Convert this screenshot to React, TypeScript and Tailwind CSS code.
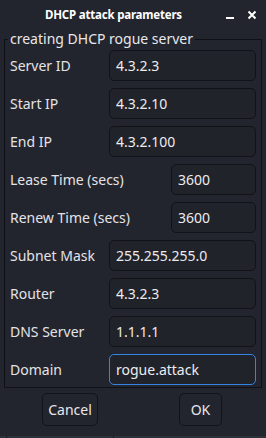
import { useState } from "react";

type Field = { label: string; value: string; narrow?: boolean; focused?: boolean };

const FIELDS: Field[] = [
  { label: "Server ID", value: "4.3.2.3" },
  { label: "Start IP", value: "4.3.2.10" },
  { label: "End IP", value: "4.3.2.100" },
  { label: "Lease Time (secs)", value: "3600", narrow: true },
  { label: "Renew Time (secs)", value: "3600", narrow: true },
  { label: "Subnet Mask", value: "255.255.255.0" },
  { label: "Router", value: "4.3.2.3" },
  { label: "DNS Server", value: "1.1.1.1" },
  { label: "Domain", value: "rogue.attack", focused: true },
];

function Row({ field }: { field: Field }) {
  const [value, setValue] = useState(field.value);
  return (
    <div className="flex items-center justify-between h-[31px]">
      <span className="text-[14px] text-[#e3e3e6]">{field.label}</span>
      <input
        value={value}
        onChange={(e) => setValue(e.target.value)}
        className={`h-[31px] rounded-[5px] bg-[#21232b] px-[6px] text-[14px] text-[#ececef] outline-none border ${
          field.focused ? "border-[#3584e4]" : "border-[#121318]"
        } ${field.narrow ? "w-[85px]" : "w-[147px]"}`}
      />
    </div>
  );
}

export default function App() {
  return (
    <div
      className="w-[266px] h-[438px] bg-[#23252e] flex flex-col text-[#e3e3e6] overflow-hidden"
      style={{ fontFamily: '"Noto Sans", "Open Sans", sans-serif' }}
    >
      {/* title bar */}
      <div className="h-[29px] flex items-center shrink-0">
        <span className="ml-[45px] text-[11.5px] font-bold text-white tracking-[-0.2px]">DHCP attack parameters</span>
        <div className="ml-auto mr-[9px] flex items-center gap-[12px]">
          <svg width="10" height="10" viewBox="0 0 10 10" aria-label="Minimize">
            <rect x="1" y="7" width="8" height="2" fill="#ffffff" />
          </svg>
          <svg width="10" height="10" viewBox="0 0 10 10" aria-label="Close">
            <path d="M1.5 1.5 L8.5 8.5 M8.5 1.5 L1.5 8.5" stroke="#ffffff" strokeWidth="2" />
          </svg>
        </div>
      </div>

      <fieldset className="mx-[4px] border border-[#101116] pl-[5px] pr-[5px] pb-[2px]">
        <legend className="-ml-[2px] px-[2px] text-[14px] leading-[20px] text-[#e8e8eb]">
          creating DHCP rogue server
        </legend>
        <div className="flex flex-col gap-[7px] pt-[1px]">
          {FIELDS.map((f) => (
            <Row key={f.label} field={f} />
          ))}
        </div>
      </fieldset>

      <div className="flex items-start mt-[5px] h-[33px]">
        <button className="ml-[42px] w-[56px] h-[33px] rounded-[5px] border border-[#121318] bg-[#23252e] text-[14px] text-[#e8e8eb]">
          Cancel
        </button>
        <button className="ml-[81px] w-[43px] h-[33px] rounded-[5px] border border-[#121318] bg-[#23252e] text-[14px] text-[#e8e8eb]">
          OK
        </button>
      </div>

      <div className="mt-auto h-[2px] flex shrink-0">
        <div className="w-[6px] bg-[#2f313a]" />
        <div className="w-[1px] bg-[#15161b]" />
        <div className="w-[106px] bg-[#2f313a]" />
        <div className="w-[1px] bg-[#15161b]" />
        <div className="flex-1 bg-[#2f313a]" />
      </div>
    </div>
  );
}
